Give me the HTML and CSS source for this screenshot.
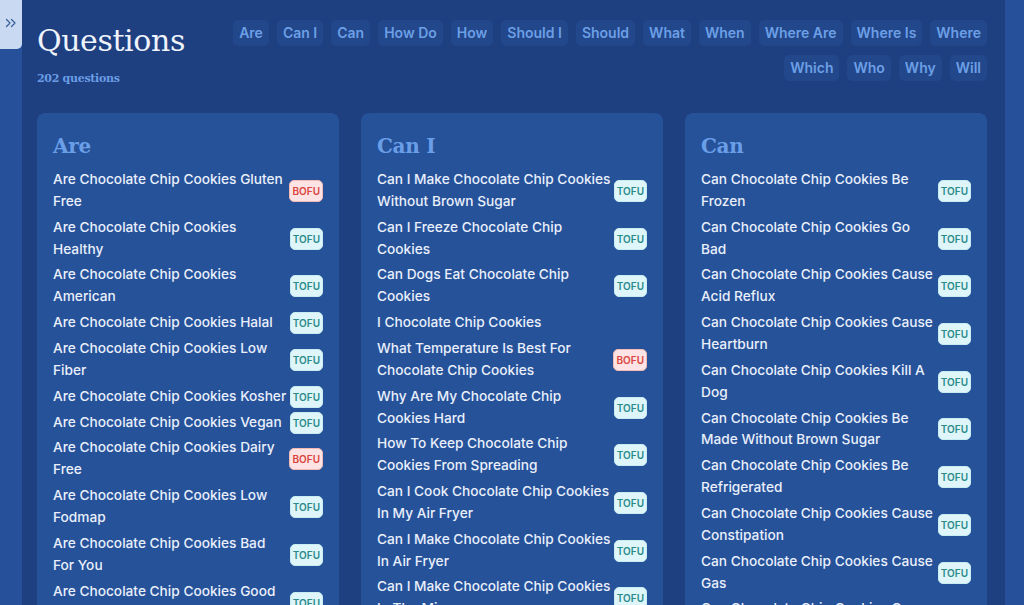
FILE: index.html
```html
<!DOCTYPE html>
<html>
<head>
<meta charset="utf-8">
<title>Questions</title>
<link rel="stylesheet" href="styles.css">
</head>
<body>
<div class="shell">
<aside class="rail">
<button class="rail_toggle" type="button"><svg width="12" height="12" viewBox="0 0 12 12"><path d="M1.5 2.5 5 6 1.5 9.5M6.5 2.5 10 6 6.5 9.5" fill="none" stroke="#3b5f9a" stroke-width="1.3" stroke-linecap="round" stroke-linejoin="round"/></svg></button>
</aside>
<main class="main">
<div class="head">
<div class="head_title">
<h1>Questions</h1>
<p>202 questions</p>
</div>
<ul class="tabs">
<li>Are</li><li>Can I</li><li>Can</li><li>How Do</li><li>How</li><li>Should I</li><li>Should</li><li>What</li><li>When</li><li>Where Are</li><li>Where Is</li><li>Where</li><li>Which</li><li>Who</li><li>Why</li><li>Will</li>
</ul>
</div>
<div class="cols">
<section class="card">
<h2>Are</h2>
<ul class="qlist">
<li><span>Are Chocolate Chip Cookies Gluten Free</span><em class="tag bofu">BOFU</em></li>
<li><span>Are Chocolate Chip Cookies Healthy</span><em class="tag">TOFU</em></li>
<li><span>Are Chocolate Chip Cookies American</span><em class="tag">TOFU</em></li>
<li><span>Are Chocolate Chip Cookies Halal</span><em class="tag">TOFU</em></li>
<li><span>Are Chocolate Chip Cookies Low Fiber</span><em class="tag">TOFU</em></li>
<li><span>Are Chocolate Chip Cookies Kosher</span><em class="tag">TOFU</em></li>
<li><span>Are Chocolate Chip Cookies Vegan</span><em class="tag">TOFU</em></li>
<li><span>Are Chocolate Chip Cookies Dairy Free</span><em class="tag bofu">BOFU</em></li>
<li><span>Are Chocolate Chip Cookies Low Fodmap</span><em class="tag">TOFU</em></li>
<li><span>Are Chocolate Chip Cookies Bad For You</span><em class="tag">TOFU</em></li>
<li><span>Are Chocolate Chip Cookies Good For You</span><em class="tag">TOFU</em></li>
<li><span>Are Chocolate Chip Cookies Vegetarian</span><em class="tag">TOFU</em></li>
</ul>
</section>
<section class="card">
<h2>Can I</h2>
<ul class="qlist">
<li><span>Can I Make Chocolate Chip Cookies Without Brown Sugar</span><em class="tag">TOFU</em></li>
<li><span>Can I Freeze Chocolate Chip Cookies</span><em class="tag">TOFU</em></li>
<li><span>Can Dogs Eat Chocolate Chip Cookies</span><em class="tag">TOFU</em></li>
<li><span>I Chocolate Chip Cookies</span></li>
<li><span>What Temperature Is Best For Chocolate Chip Cookies</span><em class="tag bofu">BOFU</em></li>
<li><span>Why Are My Chocolate Chip Cookies Hard</span><em class="tag">TOFU</em></li>
<li><span>How To Keep Chocolate Chip Cookies From Spreading</span><em class="tag">TOFU</em></li>
<li><span>Can I Cook Chocolate Chip Cookies In My Air Fryer</span><em class="tag">TOFU</em></li>
<li><span>Can I Make Chocolate Chip Cookies In Air Fryer</span><em class="tag">TOFU</em></li>
<li><span>Can I Make Chocolate Chip Cookies In The Microwave</span><em class="tag">TOFU</em></li>
</ul>
</section>
<section class="card">
<h2>Can</h2>
<ul class="qlist">
<li><span>Can Chocolate Chip Cookies Be Frozen</span><em class="tag">TOFU</em></li>
<li><span>Can Chocolate Chip Cookies Go Bad</span><em class="tag">TOFU</em></li>
<li><span>Can Chocolate Chip Cookies Cause Acid Reflux</span><em class="tag">TOFU</em></li>
<li><span>Can Chocolate Chip Cookies Cause Heartburn</span><em class="tag">TOFU</em></li>
<li><span>Can Chocolate Chip Cookies Kill A Dog</span><em class="tag">TOFU</em></li>
<li><span>Can Chocolate Chip Cookies Be Made Without Brown Sugar</span><em class="tag">TOFU</em></li>
<li><span>Can Chocolate Chip Cookies Be Refrigerated</span><em class="tag">TOFU</em></li>
<li><span>Can Chocolate Chip Cookies Cause Constipation</span><em class="tag">TOFU</em></li>
<li><span>Can Chocolate Chip Cookies Cause Gas</span><em class="tag">TOFU</em></li>
<li><span>Can Chocolate Chip Cookies Cause Diarrhea</span><em class="tag">TOFU</em></li>
</ul>
</section>
</div>
</main>
</div>
</body>
</html>
```

FILE: styles.css
```css
* { margin:0; padding:0; box-sizing:border-box;}
html,body{ height:100%;}
body{ background:#26519a; font:500 13.7px/21.9px Inter, "Noto Sans", sans-serif; color:#e9effb; overflow:hidden;}
ul,li{ list-style:none;}

.shell{ display:flex; min-height:100%;}
.rail{ width:22px; flex:none;}
.rail_toggle{ display:flex; align-items:center; justify-content:center; width:22px; height:49px; border:none; border-radius:0 0 5px 0; background:#c8d9f1; cursor:pointer; padding-bottom:4px;}

.main{ width:983px; flex:none; background:#1e3f80; padding:20px 18px 0 15px;}

.head{ display:flex; justify-content:space-between; align-items:flex-start;}
.head_title h1{ font:500 30px/36px "DejaVu Serif", serif; color:#eef3fc; letter-spacing:-0.4px; margin-top:3px;}
.head_title p{ font:bold 11px/15px "DejaVu Serif", serif; color:#6a9de6; margin-top:12px; letter-spacing:-0.3px;}

.tabs{ display:flex; flex-wrap:wrap; justify-content:flex-end; gap:9px 8px; width:760px;}
.tabs li{ height:26px; padding:0 6px; border-radius:5px; background:#22478a; color:#6c9fe6; font:600 14px/26px Inter, sans-serif; cursor:pointer;}

.cols{ display:grid; grid-template-columns:repeat(3, 1fr); gap:22px; margin-top:27px;}
.card{ background:#26529a; border-radius:8px; padding:20px 16px 16px;}
.card h2{ font:bold 20px/26px "DejaVu Serif", serif; color:#6a9fe8; margin-bottom:10px; letter-spacing:-0.3px;}

.qlist li{ display:flex; align-items:center; margin-bottom:3.9px;}
.qlist li span{ flex:1;}
.tag{ flex:none; font:600 10px/14px Inter, sans-serif; font-style:normal; padding:3px 2px; border-radius:5px; background:#def5f9; color:#2b8b8c; border:1px solid #c7ecf2;}
.tag.bofu{ background:#fde3e3; color:#d9463f; border-color:#f5b9b5;}
```
